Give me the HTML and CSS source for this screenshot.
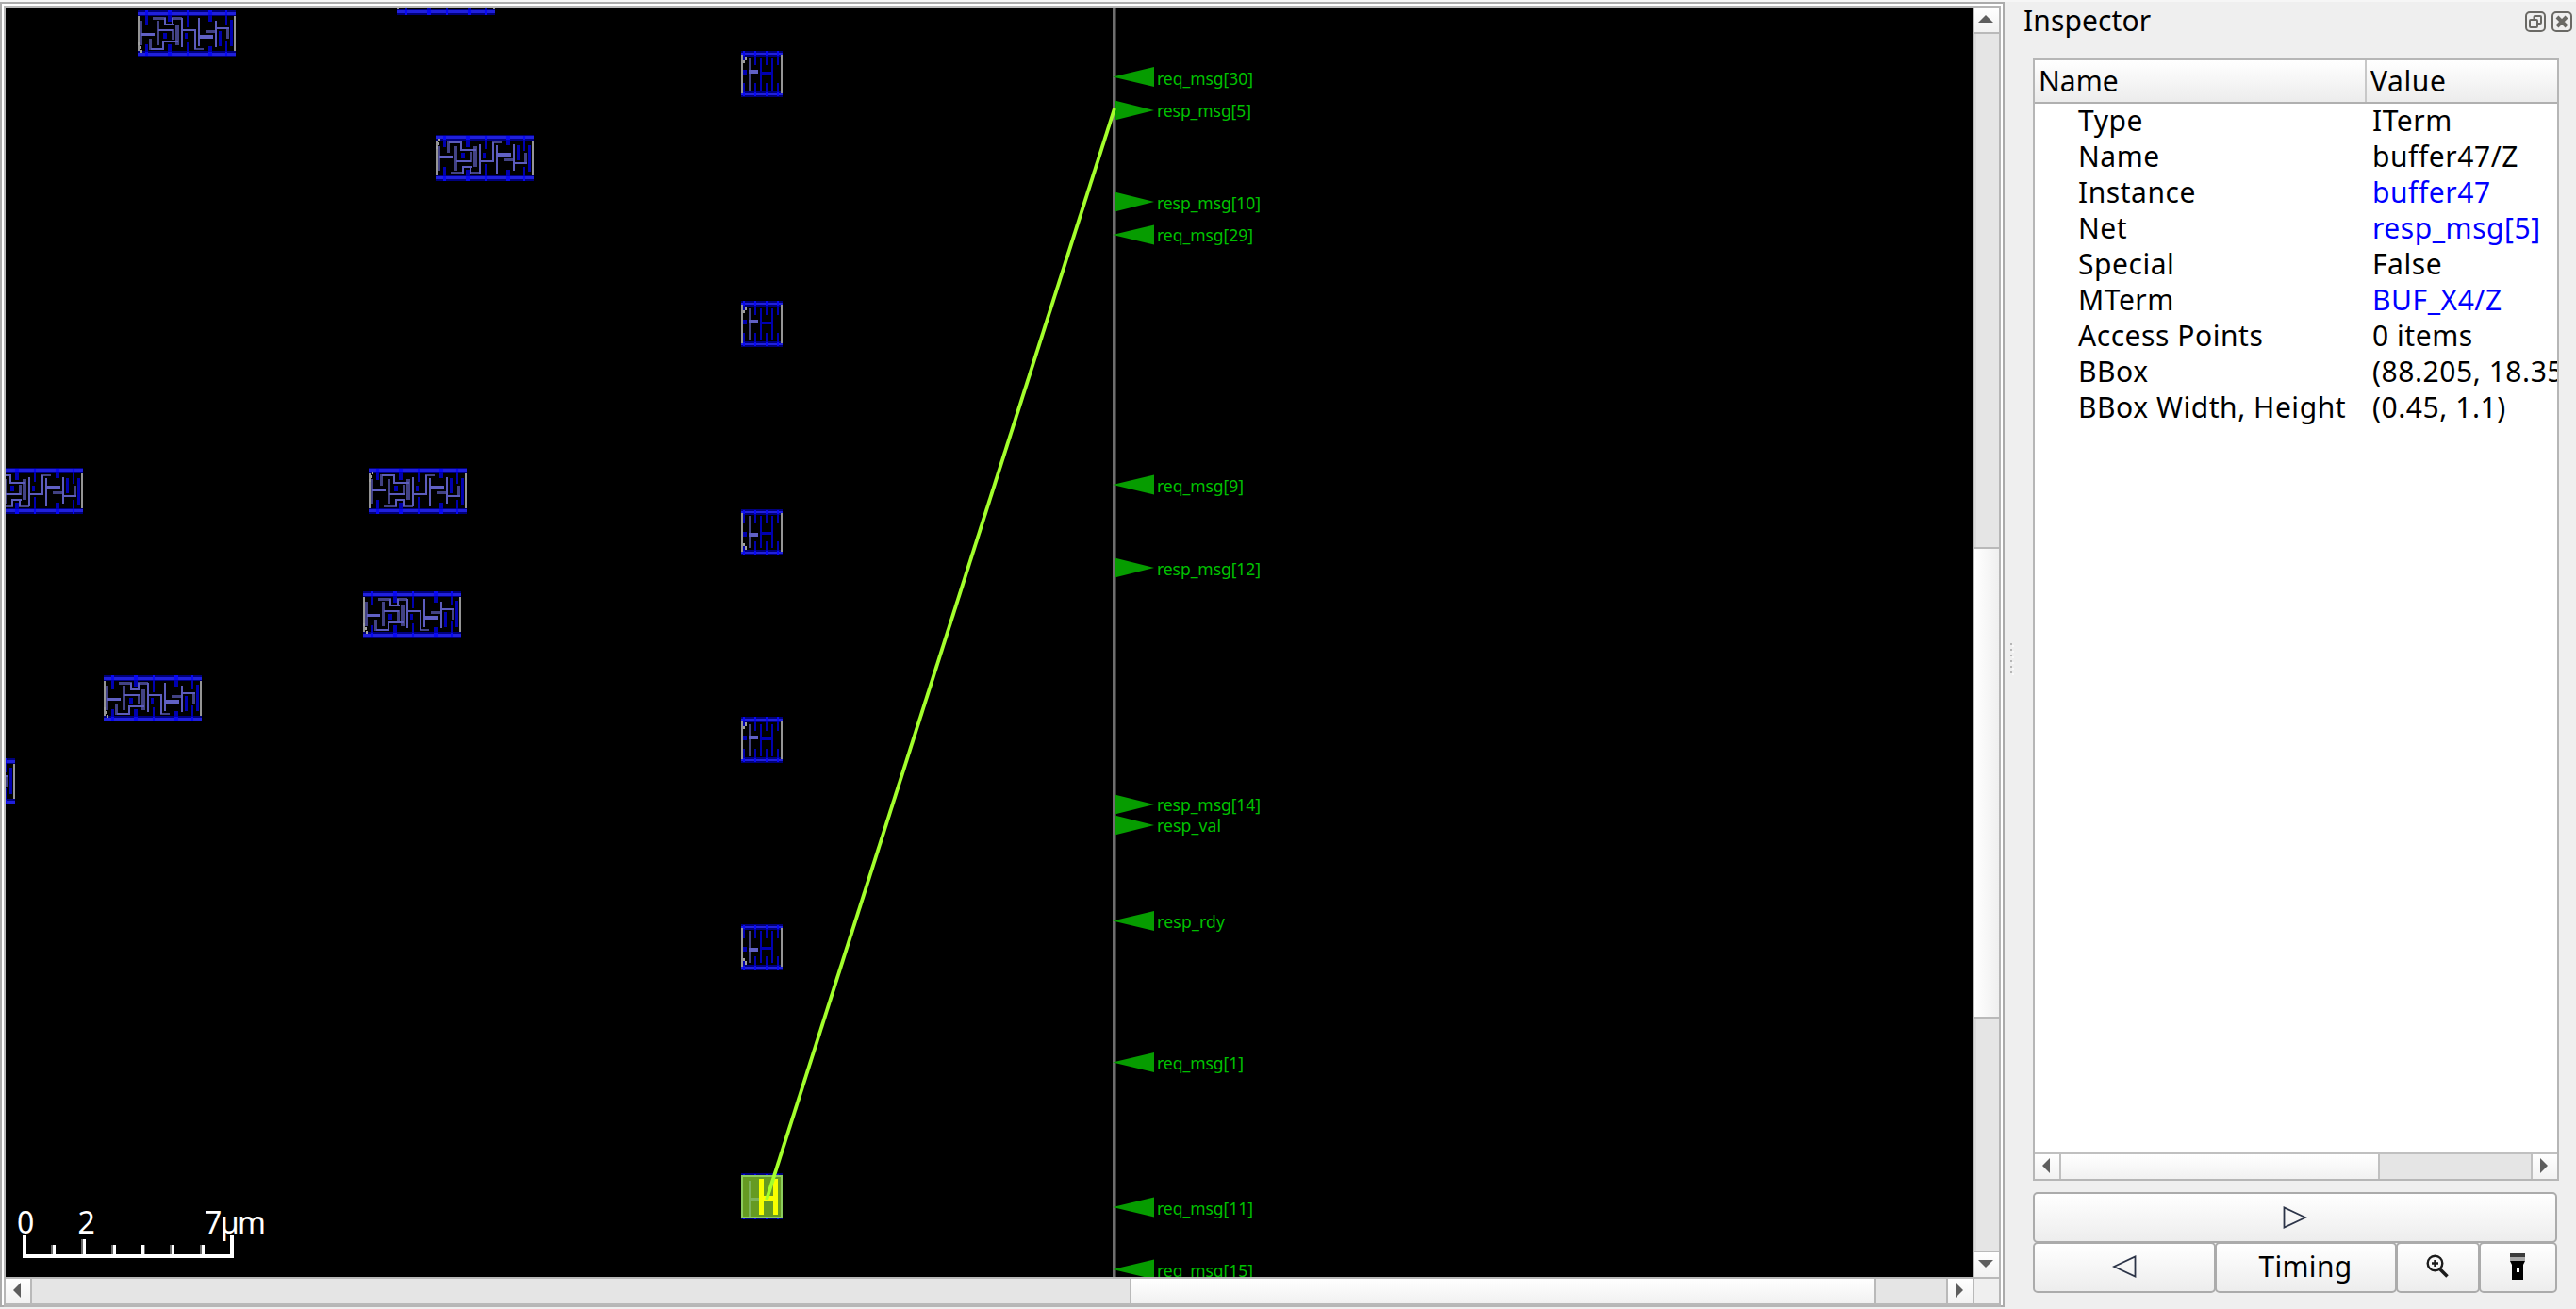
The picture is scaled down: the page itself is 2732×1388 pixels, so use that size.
FILE: index.html
```html
<!DOCTYPE html>
<html lang="en">
<head>
<meta charset="utf-8">
<title>Inspector</title>
<link rel="stylesheet" href="styles.css">
</head>
<body>
<main class="viewer">
  <div class="viewer-inner">
    <svg class="canvas" viewBox="6 8 2086 1346">
      <defs>
        <g id="cell-dff">
          <path class="outline" d="M0 3h2v44h-2zM102 3h2v44h-2z"/>
          <path class="rail-edge" d="M0 0h104v6h-104zM0 43h104v6h-104z"/>
          <path class="rail" d="M0 2h104v3h-104zM0 45h104v3h-104z"/>
          <path class="stub" d="M8 5h3v10h-3zM8 36h3v8h-3zM32 5h4v7h-4zM32 36h4v8h-4zM52 5h2v13h-2zM52 34h2v10h-2zM75 5h4v7h-4zM75 38h4v6h-4zM93 5h2v10h-2zM93 32h2v12h-2zM86 22h3v16h-3zM98 10h3v28h-3zM27 24h4v6h-4zM50 24h3v6h-3z"/>
          <path class="poly-dim" d="M2 11h3v26h-3zM20 11h3v26h-3zM16 7h14v3h-14zM36 7h11v3h-11zM36 20h3v11h-3zM40 15h4v22h-4zM12 30h3v12h-3zM72 21h11v3h-11zM94 18h3v12h-3zM60 40h10v2h-10z"/>
          <path class="poly" d="M28 8h2v8h-2zM28 14h11v2h-11zM36 8h2v8h-2zM46 8h2v31h-2zM22 20h16v2h-16zM26 32h17v2h-17zM26 32h2v10h-2zM14 40h13v2h-13zM48 20h14v2h-14zM60 20h2v21h-2zM64 8h2v30h-2zM82 11h2v28h-2zM83 18h14v2h-14z"/>
          <path class="contact" d="M4 24h14v3h-14zM65 26h15v4h-15z"/>
          <path class="mark" d="M0 34h2v3h-2zM2 38h2v3h-2zM3 42h2v3h-2z"/>
          <path class="cross" d="M8 0h3v5h-3zM32 0h4v5h-4zM52 0h2v5h-2zM75 0h4v5h-4zM93 0h2v5h-2zM8 44h3v4h-3zM32 44h4v4h-4zM52 44h2v4h-2zM75 44h4v4h-4zM93 44h2v4h-2z"/>
        </g>
        <g id="cell-buf">
          <path class="rail-edge" d="M0 0h44v6h-44zM0 43h44v6h-44z"/>
          <path class="rail" d="M0 2h44v2h-44zM0 45h44v2h-44z"/>
          <path class="outline" d="M0 4h2v41h-2zM42 4h2v41h-2z"/>
          <path class="stub" d="M2 34h2v10h-2zM2 5h2v8h-2zM14 5h2v10h-2zM14 34h2v10h-2zM26 5h2v10h-2zM26 34h2v10h-2zM38 5h2v10h-2zM38 34h2v10h-2zM2 20h4v5h-4zM20 8h2v34h-2zM32 8h2v34h-2zM20 22h14v3h-14z"/>
          <path class="poly-dim" d="M8 8h3v34h-3z"/>
          <path class="contact" d="M8 20h10v4h-10z"/>
          <path class="mark" d="M4 6h2v4h-2zM2 10h2v3h-2z"/>
          <path class="cross" d="M2 0h2v5h-2zM14 0h2v5h-2zM26 0h2v5h-2zM38 0h2v5h-2zM2 44h2v4h-2zM14 44h2v4h-2zM26 44h2v4h-2zM38 44h2v4h-2z"/>
        </g>
        <path id="pin-in" d="M0 0L44 -10.5V10.5z"/>
        <path id="pin-out" d="M0 -10.5L42 0L0 10.5z"/>
      </defs>

      <rect class="backdrop" x="6" y="8" width="2086" height="1346"/>
      <path class="die-edge" d="M1180 8h2v1346h-2z"/>
      <path class="die-edge-soft" d="M1182 8h2v1346h-2z"/>

      <g class="cells">
        <use href="#cell-dff" transform="translate(146 11)"/>
        <use href="#cell-dff" transform="translate(421 16) scale(1 -1)"/>
        <use href="#cell-dff" transform="translate(462 192) scale(1 -1)"/>
        <use href="#cell-dff" transform="translate(-16 545) scale(1 -1)"/>
        <use href="#cell-dff" transform="translate(391 545) scale(1 -1)"/>
        <use href="#cell-dff" transform="translate(385 627)"/>
        <use href="#cell-dff" transform="translate(110 716)"/>
        <use href="#cell-dff" transform="translate(-88 804)"/>
        <use href="#cell-buf" transform="translate(786 54)"/>
        <use href="#cell-buf" transform="translate(786 319)"/>
        <use href="#cell-buf" transform="translate(786 589) scale(1 -1)"/>
        <use href="#cell-buf" transform="translate(786 760)"/>
        <use href="#cell-buf" transform="translate(786 1029) scale(1 -1)"/>
        <use href="#cell-buf" transform="translate(786 1293) scale(1 -1)"/>
      </g>

      <g class="pins">
        <use href="#pin-in" x="1180" y="81.500"/><use href="#pin-out" x="1182" y="117"/>
        <use href="#pin-out" x="1182" y="214"/><use href="#pin-in" x="1180" y="249"/>
        <use href="#pin-in" x="1180" y="514"/><use href="#pin-out" x="1182" y="602"/>
        <use href="#pin-out" x="1182" y="853"/><use href="#pin-out" x="1182" y="875"/>
        <use href="#pin-in" x="1180" y="976.500"/><use href="#pin-in" x="1180" y="1126.500"/>
        <use href="#pin-in" x="1180" y="1280"/><use href="#pin-in" x="1180" y="1346"/>
      </g>
      <g class="pin-labels">
        <text x="1227" y="90" textLength="102">req_msg[30]</text>
        <text x="1227" y="124" textLength="100">resp_msg[5]</text>
        <text x="1227" y="222" textLength="110">resp_msg[10]</text>
        <text x="1227" y="256" textLength="102">req_msg[29]</text>
        <text x="1227" y="522" textLength="92">req_msg[9]</text>
        <text x="1227" y="610" textLength="110">resp_msg[12]</text>
        <text x="1227" y="860" textLength="110">resp_msg[14]</text>
        <text x="1227" y="882" textLength="68">resp_val</text>
        <text x="1227" y="984" textLength="72">resp_rdy</text>
        <text x="1227" y="1134" textLength="92">req_msg[1]</text>
        <text x="1227" y="1288" textLength="102">req_msg[11]</text>
        <text x="1227" y="1354" textLength="102">req_msg[15]</text>
      </g>

      <rect class="selected" x="787" y="1247" width="42" height="44"/>
      <path class="selected-pin-dim" d="M794 1252h3v38h-3zM797 1270h8v4h-8z"/>
      <path class="selected-pin" d="M805 1250h5v18h10v-18h5v38h-5v-14h-10v14h-5z"/>
      <path class="flyline" d="M1182 115L813 1272"/>

      <path class="ruler" d="M24 1310h4v20h216v-20h4v24h-224z"/>
      <path class="ruler" d="M56 1320h3v10h-3zM88 1314h3v16h-3zM120 1320h3v10h-3zM150 1320h3v10h-3zM182 1320h3v10h-3zM214 1320h3v10h-3z"/>
      <path class="ruler-soft" d="M54 1320h2v10h-2zM86 1314h2v16h-2zM118 1320h2v10h-2zM153 1320h1v10h-1zM180 1320h2v10h-2zM212 1320h2v10h-2z"/>
      <g class="ruler-labels">
        <text x="18" y="1308">0</text>
        <text x="82.500" y="1308">2</text>
        <text x="217" y="1308" textLength="65">7µm</text>
      </g>
    </svg>

    <div class="vbar">
      <div class="arrow"><svg viewBox="0 0 26 26"><path d="M4 16h16l-8-8z"/></svg></div>
      <div class="groove-a"></div>
      <div class="thumb"></div>
      <div class="groove-b"></div>
      <div class="arrow"><svg viewBox="0 0 26 26"><path d="M4 8h16l-8 8z"/></svg></div>
    </div>
    <div class="hbar">
      <div class="arrow"><svg viewBox="0 0 26 26"><path d="M16 4v16l-8-8z"/></svg></div>
      <div class="groove-a"></div>
      <div class="thumb"></div>
      <div class="groove-b"></div>
      <div class="arrow"><svg viewBox="0 0 26 26"><path d="M8 4v16l8-8z"/></svg></div>
    </div>
    <div class="corner"></div>
  </div>
</main>

<div class="splitter"><i></i><i></i><i></i><i></i><i></i><i></i></div>

<aside class="inspector">
  <header class="dock-title">
    <h1>Inspector</h1>
    <svg class="dock-icon" viewBox="0 0 22 22">
      <rect x="1" y="1" width="20" height="20" rx="4"/>
      <rect x="9.500" y="5" width="7.500" height="8" rx="1"/>
      <rect class="front" x="5" y="9" width="8" height="8" rx="1"/>
    </svg>
    <svg class="dock-icon" viewBox="0 0 22 22">
      <rect x="1" y="1" width="20" height="20" rx="4"/>
      <path class="cross-mark" d="M6 6l10 10M16 6L6 16"/>
    </svg>
  </header>

  <section class="tree">
    <div class="head"><span>Name</span><span>Value</span></div>
    <dl class="rows">
      <dt>Type</dt><dd>ITerm</dd>
      <dt>Name</dt><dd>buffer47/Z</dd>
      <dt>Instance</dt><dd class="link">buffer47</dd>
      <dt>Net</dt><dd class="link">resp_msg[5]</dd>
      <dt>Special</dt><dd>False</dd>
      <dt>MTerm</dt><dd class="link">BUF_X4/Z</dd>
      <dt>Access Points</dt><dd>0 items</dd>
      <dt>BBox</dt><dd>(88.205, 18.355)</dd>
      <dt>BBox Width, Height</dt><dd>(0.45, 1.1)</dd>
    </dl>
    <div class="tree-bar">
      <div class="arrow"><svg viewBox="0 0 26 26"><path d="M16 4v16l-8-8z"/></svg></div>
      <div class="thumb"></div>
      <div class="groove-b"></div>
      <div class="arrow"><svg viewBox="0 0 26 26"><path d="M8 4v16l8-8z"/></svg></div>
    </div>
  </section>

  <div class="buttons">
    <button class="wide"><svg class="tri" viewBox="0 0 26 24"><path d="M1.500 1.500v21L24 12z"/></svg></button>
    <button><svg class="tri" viewBox="0 0 26 24"><path d="M24.500 1.500v21L2 12z"/></svg></button>
    <button>Timing</button>
    <button><svg class="lens" viewBox="0 0 24 26">
      <circle cx="9.500" cy="9.500" r="7.800"/><path d="M9.500 6v7M6 9.500h7"/><path class="handle" d="M14.500 15.500L22.500 23.500"/>
    </svg></button>
    <button><svg class="torch" viewBox="0 0 16 28">
      <path class="lip" d="M0 0h16v4h-16z"/><path class="glass" d="M0 4h16v4h-16z"/>
      <path d="M0 8h16l-2 4v16h-12v-16z"/><path class="switch" d="M7 15h3v5h-3z"/>
    </svg></button>
  </div>
</aside>
</body>
</html>
```
FILE: styles.css
```css
* { box-sizing: border-box; }

body {
  margin: 0;
  width: 2732px;
  height: 1388px;
  overflow: hidden;
  display: flex;
  background: #efefef;
  border-top: 2px solid #f6f6f6;
  font: 30px/38px "Noto Sans", "Open Sans", sans-serif;
  color: #000;
}

.viewer {
  width: 2126px;
  height: 1384px;
  padding: 2px 2px 0;
  border: 2px solid #ababab;
  background: #fff;
  flex: none;
}

.viewer-inner {
  width: 2118px;
  height: 1380px;
  border: 2px solid #b6b6b6;
  background: #b9b9b9;
  display: grid;
  grid-template: 1346px 26px / 2086px 26px;
  gap: 2px;
}

.canvas { display: block; width: 2086px; height: 1346px; }
.backdrop { fill: #000; }
.die-edge { fill: #6e6e6e; }
.die-edge-soft { fill: #3b3b3b; }

.cells { shape-rendering: crispEdges; }
.outline { fill: #959595; }
.rail-edge { fill: #00007c; }
.rail { fill: #2020dc; }
.stub { fill: #0000b0; }
.cross { fill: #0808f4; }
.poly-dim { fill: #424284; }
.poly { fill: #5c5cbc; }
.contact { fill: #6161c4; }
.mark { fill: #a0a0a0; }

.pins { fill: #069c00; }
.pin-labels { fill: #00c000; font-size: 17.500px; }
.flyline { stroke: #a3ff2c; stroke-width: 3.800; }
.selected { fill: #659a22; stroke: #8ccc5c; stroke-width: 2; }
.selected-pin { fill: #f8ff00; }
.selected-pin-dim { fill: #7db35c; }
.ruler { fill: #fff; }
.ruler-soft { fill: #666; }
.ruler-labels { fill: #fff; font-size: 32px; }

.vbar, .hbar { display: grid; gap: 2px; }
.vbar { grid-template-rows: 26px 544px 496px 246px 26px; }
.hbar { grid-template-columns: 26px 1164px 788px 74px 26px; }
.groove-a, .groove-b { background: #e5e5e5; }
.vbar .groove-a, .vbar .groove-b { border-left: 2px solid #dcdcdc; }
.thumb { background: linear-gradient(#fff, #f1f1f1); }
.vbar .thumb { background: linear-gradient(90deg, #fff, #efefef); }
.arrow { background: linear-gradient(#fff, #f2f2f2); }
.arrow svg { display: block; width: 26px; height: 26px; fill: #5e5e5e; }
.corner { background: #efefef; }

.splitter {
  width: 30px;
  padding: 680px 0 0 6px;
  display: flex;
  flex-direction: column;
  gap: 4px;
  flex: none;
}
.splitter i { width: 2px; height: 2px; background: #b6b6b6; box-shadow: 2px 2px #f8f8f8; }

.inspector { width: 576px; display: flex; flex-direction: column; }

.dock-title {
  height: 60px;
  padding-top: 10px;
  padding-right: 4px;
  margin-left: -12px;
  display: flex;
  gap: 6px;
}
.dock-title h1 { margin: -9px auto 0 0; font: inherit; padding-left: 2px; letter-spacing: 0.1px; }
.dock-icon { width: 22px; height: 22px; fill: none; stroke: #6a6965; stroke-width: 2; }
.dock-icon .front { fill: #efefef; }
.dock-icon .cross-mark { stroke-width: 4; }

.tree {
  width: 558px;
  height: 1190px;
  border: 2px solid #b6b6b6;
  background: #fff;
  display: flex;
  flex-direction: column;
}
.head {
  height: 46px;
  border-bottom: 2px solid #b0b0b0;
  background: linear-gradient(#fff, #ececec);
  display: grid;
  grid-template-columns: 352px 1fr;
  line-height: 43px;
}
.head span { padding-left: 4px; }
.head span:last-child { letter-spacing: 0.6px; }
.head span:first-child { border-right: 2px solid #c8c8c8; }

.rows {
  flex: 1;
  margin: 0;
  overflow: hidden;
  display: grid;
  grid-template-columns: 354px 200px;
  grid-auto-rows: 38px;
  line-height: 36px;
  letter-spacing: 0.55px;
  white-space: nowrap;
}
.rows dt { padding-left: 46px; }
.rows dd { margin: 0; padding-left: 4px; }
.rows .link { color: #0000ff; }

.tree-bar {
  height: 28px;
  border-top: 2px solid #c0c0c0;
  background: #c0c0c0;
  display: grid;
  grid-template-columns: 26px 336px 160px 26px;
  gap: 2px;
}

.buttons {
  width: 557px;
  margin-top: 12px;
  display: grid;
  grid-template: 53px 53px / 193px 192px 88px 82px;
}
.buttons button {
  font: inherit;
  letter-spacing: 0.3px;
  color: #000;
  padding: 0 1px 2px 0;
  margin: 0 -1px -1px 0;
  border: 2px solid #ababab;
  border-radius: 5px;
  background: linear-gradient(#fff, #ededed);
  display: flex;
  align-items: center;
  justify-content: center;
}
.buttons .wide { grid-column: 1 / -1; padding-bottom: 0; }
.tri { width: 26px; height: 24px; fill: none; stroke: #2c3448; stroke-width: 1.800; }
.lens { width: 24px; height: 26px; fill: none; stroke: #1c1c1c; stroke-width: 2.400; }
.lens .handle { stroke-width: 3.600; }
.torch { width: 16px; height: 28px; }
.torch .lip { fill: #3c3c3c; }
.torch .glass { fill: #a8a8a8; }
.torch .switch { fill: #fff; }
```
